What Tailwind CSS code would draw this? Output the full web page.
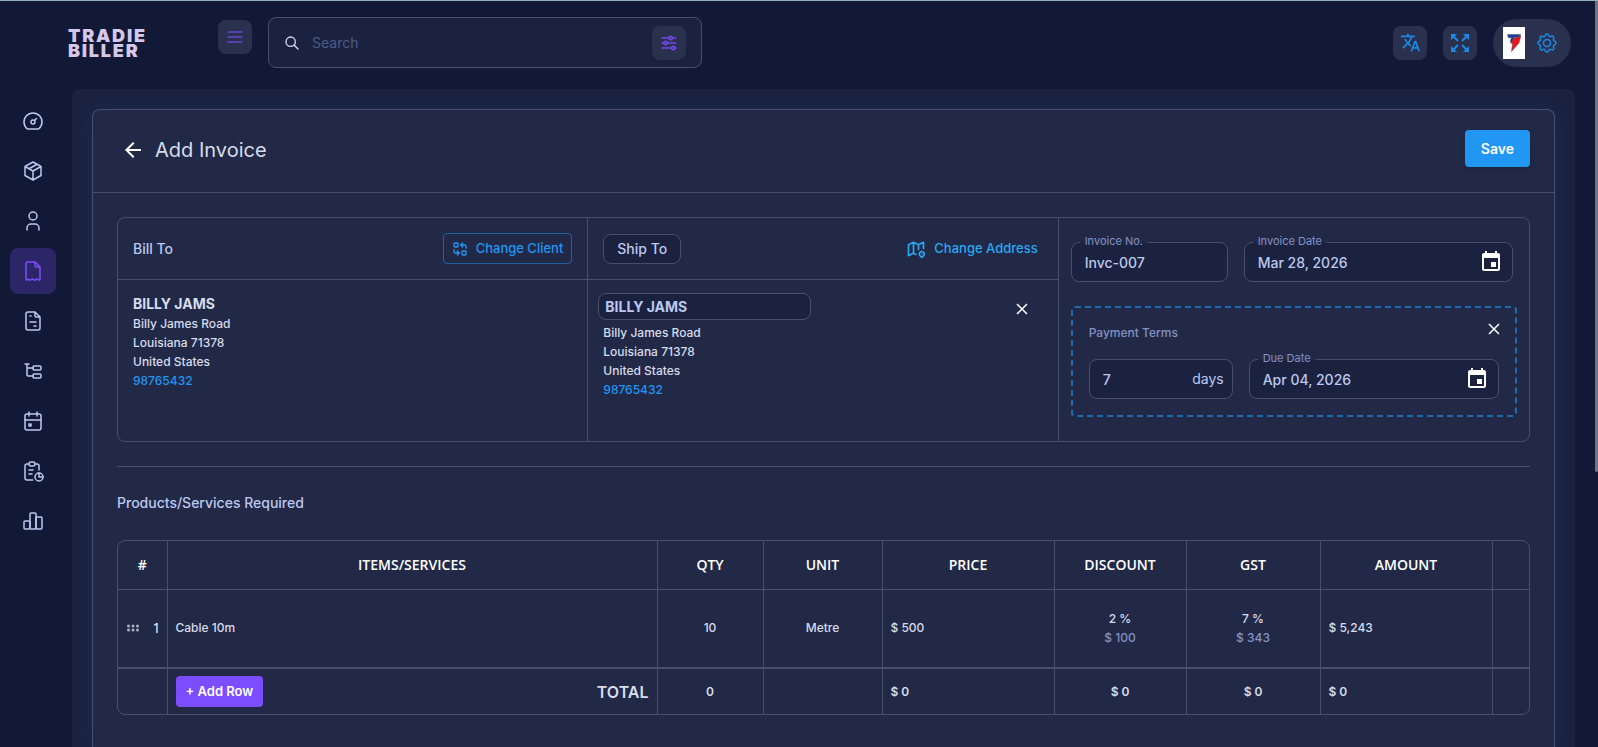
<!DOCTYPE html>
<html lang="en">
<head>
  <meta charset="UTF-8" />
  <title>Add Invoice - Tradie Biller</title>
  <meta name="viewport" content="width=device-width, initial-scale=1" />
  <script src="https://cdn.jsdelivr.net/npm/@tailwindcss/browser@4"></script>
</head>
<body class="h-screen overflow-hidden bg-[#111936] font-['Inter',sans-serif] text-sm text-[#bdc8f0]">
  <div class="flex h-full flex-col border-t border-[#8fb5ba]">

    <!-- Top bar -->
    <header class="flex h-[88px] shrink-0 items-start pt-4 pr-[27px] pl-[68px]">
      <a href="#" class="flex h-[51px] w-[150px] flex-col justify-center text-lg leading-[15px] font-black tracking-widest text-[#d6c8ea]"><span>TRADIE</span><span>BILLER</span></a>
      <button type="button" aria-label="Toggle menu" class="mt-[3px] flex size-[34px] items-center justify-center rounded-lg bg-[#29314f] text-[#6445cc]">
        <svg class="size-5" viewBox="0 0 24 24" fill="none" stroke="currentColor" stroke-width="2"><path d="M3 6h18M3 12h18M3 18h18"/></svg>
      </button>
      <div class="ml-4 flex h-[51px] w-[434px] items-center rounded-lg border border-[#474f6c] bg-[#1a223f] pr-[15px] pl-[15px]">
        <svg class="size-4 text-[#d7dcec]" viewBox="0 0 24 24" fill="none" stroke="currentColor" stroke-width="2" stroke-linecap="round"><circle cx="10" cy="10" r="7"/><path d="M21 21l-6-6"/></svg>
        <input type="text" aria-label="Search" placeholder="Search" class="ml-3 min-w-0 flex-1 bg-transparent placeholder-[#4d5a88] outline-none" />
        <button type="button" aria-label="Filters" class="flex size-[34px] items-center justify-center rounded-lg bg-[#29314f] text-[#7046e6]">
          <svg class="size-5" viewBox="0 0 24 24" fill="none" stroke="currentColor" stroke-width="2"><circle cx="14" cy="6" r="2"/><path d="M3 6h9M16 6h5"/><circle cx="8" cy="12" r="2"/><path d="M3 12h3M10 12h11"/><circle cx="17" cy="18" r="2"/><path d="M3 18h12M19 18h2"/></svg>
        </button>
      </div>
      <div class="ml-auto flex h-[51px] items-center gap-4 text-[#1e88e5]">
        <button type="button" aria-label="Language" class="flex size-[34px] items-center justify-center rounded-lg bg-[#29314f]">
          <svg class="size-[21px]" viewBox="0 0 24 24" fill="currentColor"><path d="m12.87 15.07-2.54-2.51.03-.03c1.74-1.94 2.98-4.17 3.71-6.53H17V4h-7V2H8v2H1v1.99h11.17C11.5 7.92 10.44 9.75 9 11.35 8.07 10.32 7.3 9.19 6.69 8h-2c.73 1.63 1.73 3.17 2.98 4.56l-5.09 5.02L4 19l5-5 3.11 3.11.76-2.04zM18.5 10h-2L12 22h2l1.12-3h4.75L21 22h2l-4.5-12zm-2.62 7 1.62-4.33L19.12 17h-3.24z"/></svg>
        </button>
        <button type="button" aria-label="Full screen" class="flex size-[34px] items-center justify-center rounded-lg bg-[#29314f]">
          <svg class="size-5" viewBox="0 0 20 20" fill="currentColor" stroke="currentColor" stroke-width="2"><path stroke="none" d="M1 1h6L1 7zM19 1v6l-6-6zM1 19v-6l6 6zM19 19h-6l6-6z"/><path d="M3 3l5 5M17 3l-5 5M3 17l5-5M17 17l-5-5"/></svg>
        </button>
        <button type="button" aria-label="Account settings" class="flex h-12 w-[78px] items-center gap-[10px] rounded-full bg-[#29314f] pl-[10px]">
          <svg class="h-8 w-[22px] bg-white" viewBox="0 0 22 32"><path fill="#173f9c" stroke="#5b5360" stroke-width=".5" d="M4.500 7.500h13l-1.500 3h-5l-1.500 5-2.500-1 1.500-4-3 .5z"/><path fill="#e8141f" stroke="#5b5360" stroke-width=".5" d="M11.500 11l6.500-2.500-2 7.500-7.500 8.500 1-7.500-2-1z"/></svg>
          <svg class="size-6" viewBox="0 0 24 24" fill="none" stroke="currentColor" stroke-width="1.5"><path d="M10.325 4.317c.426-1.756 2.924-1.756 3.35 0a1.724 1.724 0 0 0 2.573 1.066c1.543-.94 3.31.826 2.37 2.37a1.724 1.724 0 0 0 1.065 2.572c1.756.426 1.756 2.924 0 3.35a1.724 1.724 0 0 0-1.066 2.573c.94 1.543-.826 3.31-2.37 2.37a1.724 1.724 0 0 0-2.572 1.065c-.426 1.756-2.924 1.756-3.35 0a1.724 1.724 0 0 0-2.573-1.066c-1.543.94-3.31-.826-2.37-2.37a1.724 1.724 0 0 0-1.065-2.572c-1.756-.426-1.756-2.924 0-3.35a1.724 1.724 0 0 0 1.066-2.573c-.94-1.543.826-3.31 2.37-2.37 1 .608 2.296.07 2.572-1.065z"/><circle cx="12" cy="12" r="3.5"/></svg>
        </button>
      </div>
    </header>

    <div class="flex min-h-0 flex-1">
      <!-- Side navigation -->
      <nav class="flex w-[72px] shrink-0 flex-col gap-1 pt-[9px] pl-[10px]">
        <a href="#" aria-label="Dashboard" class="flex size-[46px] items-center justify-center rounded-lg">
          <svg class="size-6" viewBox="0 0 24 24" fill="none" stroke="currentColor" stroke-width="1.5" stroke-linecap="round" stroke-linejoin="round"><circle cx="12" cy="13" r="2"/><path d="M13.45 11.55l2.05-2.05M6.4 20a9 9 0 1 1 11.2 0z"/></svg>
        </a>
        <a href="#" aria-label="Products" class="flex size-[46px] items-center justify-center rounded-lg">
          <svg class="size-6" viewBox="0 0 24 24" fill="none" stroke="currentColor" stroke-width="1.5" stroke-linecap="round" stroke-linejoin="round"><path d="M12 3l8 4.5v9L12 21l-8-4.5v-9zM12 12l8-4.5M12 12v9M12 12L4 7.5M16 5.25l-8 4.5"/></svg>
        </a>
        <a href="#" aria-label="Clients" class="flex size-[46px] items-center justify-center rounded-lg">
          <svg class="size-6" viewBox="0 0 24 24" fill="none" stroke="currentColor" stroke-width="1.5" stroke-linecap="round" stroke-linejoin="round"><circle cx="12" cy="7" r="4"/><path d="M6 21v-2a4 4 0 0 1 4-4h4a4 4 0 0 1 4 4v2"/></svg>
        </a>
        <a href="#" aria-label="Invoices" aria-current="page" class="flex size-[46px] items-center justify-center rounded-lg bg-[#2d2666] text-[#7c4dff]">
          <svg class="size-6" viewBox="0 0 24 24" fill="none" stroke="currentColor" stroke-width="1.5" stroke-linecap="round" stroke-linejoin="round"><path d="M14 3v4a1 1 0 0 0 1 1h4M5 20V5a2 2 0 0 1 2-2h7l5 5v12c0 1-1 1.300-1.800.6-.8-.8-1.600-.8-2.400 0-.8.700-1.400.700-2.200 0-.8-.8-1.600-.8-2.400 0-.8.700-1.400.700-2.200 0-.6-.6-1.300-.5-1.900.1C6.200 21.300 5 21 5 20z"/></svg>
        </a>
        <a href="#" aria-label="Quotes" class="flex size-[46px] items-center justify-center rounded-lg">
          <svg class="size-6" viewBox="0 0 24 24" fill="none" stroke="currentColor" stroke-width="1.5" stroke-linecap="round" stroke-linejoin="round"><path d="M14 3v4a1 1 0 0 0 1 1h4M17 21H7a2 2 0 0 1-2-2V5a2 2 0 0 1 2-2h7l5 5v11a2 2 0 0 1-2 2zM9 7h1M9 13h6M13 17h2"/></svg>
        </a>
        <a href="#" aria-label="Jobs" class="flex size-[46px] items-center justify-center rounded-lg">
          <svg class="size-6" viewBox="0 0 24 24" fill="none" stroke="currentColor" stroke-width="1.5" stroke-linecap="round" stroke-linejoin="round"><path d="M6 9h6M4 5h4M6 5v11a1 1 0 0 0 1 1h5"/><rect x="12" y="7" width="8" height="4" rx="1"/><rect x="12" y="15" width="8" height="4" rx="1"/></svg>
        </a>
        <a href="#" aria-label="Calendar" class="flex size-[46px] items-center justify-center rounded-lg">
          <svg class="size-6" viewBox="0 0 24 24" fill="none" stroke="currentColor" stroke-width="1.5" stroke-linecap="round" stroke-linejoin="round"><rect x="4" y="5" width="16" height="16" rx="2"/><path d="M16 3v4M8 3v4M4 11h16M8 15h2v2H8z"/></svg>
        </a>
        <a href="#" aria-label="Timesheets" class="flex size-[46px] items-center justify-center rounded-lg">
          <svg class="size-6" viewBox="0 0 24 24" fill="none" stroke="currentColor" stroke-width="1.5" stroke-linecap="round" stroke-linejoin="round"><path d="M8 5H6a2 2 0 0 0-2 2v12a2 2 0 0 0 2 2h5.700M18 14v4h4M18 11V7a2 2 0 0 0-2-2h-2M8 11h4M8 15h3"/><rect x="8" y="3" width="6" height="4" rx="2"/><circle cx="18" cy="18" r="4"/></svg>
        </a>
        <a href="#" aria-label="Reports" class="flex size-[46px] items-center justify-center rounded-lg">
          <svg class="size-6" viewBox="0 0 24 24" fill="none" stroke="currentColor" stroke-width="1.5" stroke-linecap="round" stroke-linejoin="round"><rect x="3" y="12" width="6" height="8" rx="1"/><rect x="9" y="4" width="6" height="16" rx="1"/><rect x="15" y="8" width="6" height="12" rx="1"/></svg>
        </a>
      </nav>

      <main class="mr-[23px] min-w-0 flex-1 overflow-hidden rounded-t-lg bg-[#1a223f] p-5 pb-0">
        <section class="min-h-full rounded-t-lg border border-b-0 border-[#474f6c] bg-[#212946] shadow-[0_2px_20px_0_rgba(33,150,243,0.1)]">
          <div class="flex items-start justify-between border-b border-[#474f6c] px-6 pt-5 pb-[25px]">
            <div class="flex h-10 items-center -mb-1">
              <button type="button" aria-label="Back" class="p-1 text-white">
                <svg class="size-6" viewBox="0 0 24 24" fill="currentColor"><path d="M20 11H7.830l5.590-5.590L12 4l-8 8 8 8 1.410-1.410L7.830 13H20v-2z"/></svg>
              </button>
              <h1 class="ml-[6px] text-xl text-[#d7dcec]">Add Invoice</h1>
            </div>
            <button type="button" class="h-[37px] rounded bg-[#2196f3] px-4 font-semibold text-white shadow-md">Save</button>
          </div>

          <div class="px-6 pt-6">
            <!-- Client, shipping and dates -->
            <div class="grid min-h-[225px] grid-cols-3 divide-x divide-[#474f6c] rounded-lg border border-[#474f6c]">
              <div>
                <div class="flex h-[62px] items-center justify-between border-b border-[#474f6c] px-[15px]">
                  <h2 class="font-medium">Bill To</h2>
                  <button type="button" class="flex h-[31px] items-center gap-2 rounded border border-[#2196f3]/50 px-2 text-[13px] font-medium text-[#2196f3]">
                    <svg class="size-4" viewBox="0 0 24 24" fill="none" stroke="currentColor" stroke-width="2" stroke-linecap="round" stroke-linejoin="round"><rect x="3" y="3" width="6" height="6" rx="1"/><rect x="15" y="15" width="6" height="6" rx="1"/><path d="M21 11V8a2 2 0 0 0-2-2h-6l3 3M16 3l-3 3M3 13v3a2 2 0 0 0 2 2h6l-3-3M8 21l3-3"/></svg>
                    Change Client
                  </button>
                </div>
                <div class="px-[15px] pt-[14px] text-xs leading-[19px] font-medium text-[#d7dcec]">
                  <p class="text-sm leading-5 font-bold">BILLY JAMS</p>
                  <p>Billy James Road</p>
                  <p>Louisiana 71378</p>
                  <p>United States</p>
                  <a href="tel:98765432" class="text-[#2196f3]">98765432</a>
                </div>
              </div>

              <div>
                <div class="flex h-[62px] items-center justify-between border-b border-[#474f6c] pr-5 pl-[15px]">
                  <input type="text" aria-label="Shipping heading" value="Ship To" class="h-[30px] w-[78px] rounded-lg border border-[#474f6c] bg-[#1a223f] px-[13px] font-medium outline-none" />
                  <button type="button" class="flex items-center gap-2 text-[13px] font-medium text-[#29a8f5]">
                    <svg class="size-5" viewBox="0 0 24 24" fill="none" stroke="currentColor" stroke-width="2" stroke-linecap="round" stroke-linejoin="round"><path d="M12 18.500L9 17l-6 3V7l6-3 6 3 6-3v7.500M9 4v13M15 7v5.500"/><path d="M21.121 20.121a3 3 0 1 0-4.242 0c.418.419 1.125 1.045 2.121 1.879 1.051-.89 1.759-1.516 2.121-1.879zM19 18v.01"/></svg>
                    Change Address
                  </button>
                </div>
                <div class="flex items-start justify-between pt-[13px] pr-7 pl-[10px]">
                  <div class="text-xs leading-[19px] font-medium text-[#d7dcec]">
                    <input type="text" aria-label="Shipping name" value="BILLY JAMS" class="mb-[3px] block h-[27px] w-[213px] rounded-lg border border-[#474f6c] bg-[#1a223f] px-[6px] text-sm font-bold text-[#bdc8f0] outline-none" />
                    <div class="pl-[5px]">
                      <p>Billy James Road</p>
                      <p>Louisiana 71378</p>
                      <p>United States</p>
                      <a href="tel:98765432" class="text-[#2196f3]">98765432</a>
                    </div>
                  </div>
                  <button type="button" aria-label="Remove shipping address" class="mt-2 text-white">
                    <svg class="size-4" viewBox="0 0 16 16" stroke="currentColor" stroke-width="1.500"><path d="M3 3l10 10M13 3L3 13"/></svg>
                  </button>
                </div>
              </div>

              <div class="px-3 pt-6">
                <div class="flex gap-4 pr-1">
                  <div class="relative flex h-10 w-[157px] items-center rounded-lg border border-[#474f6c] bg-[#1a223f] px-[13px]">
                    <label for="invoiceNo" class="absolute -top-[10px] left-2 bg-linear-to-b from-[#212946] from-60% to-[#1a223f] to-60% px-[5px] text-[11px] leading-4 text-[#8492c4]">Invoice No.</label>
                    <input type="text" id="invoiceNo" value="Invc-007" class="h-6 min-w-0 flex-1 bg-transparent font-medium outline-none" />
                  </div>
                  <div class="relative flex h-10 min-w-0 flex-1 items-center rounded-lg border border-[#474f6c] bg-[#1a223f] pr-[9px] pl-[13px]">
                    <label for="invoiceDate" class="absolute -top-[10px] left-2 bg-linear-to-b from-[#212946] from-60% to-[#1a223f] to-60% px-[5px] text-[11px] leading-4 text-[#8492c4]">Invoice Date</label>
                    <input type="text" id="invoiceDate" value="Mar 28, 2026" class="h-6 min-w-0 flex-1 bg-transparent font-medium outline-none" />
                    <button type="button" aria-label="Choose invoice date" class="text-white">
                      <svg class="size-6" viewBox="0 0 24 24" fill="currentColor"><path d="M17 12h-5v5h5v-5zM16 1v2H8V1H6v2H5c-1.110 0-1.990.9-1.990 2L3 19c0 1.100.89 2 2 2h14c1.100 0 2-.9 2-2V5c0-1.100-.9-2-2-2h-1V1h-2zm3 18H5V8h14v11z"/></svg>
                    </button>
                  </div>
                </div>

                <div class="mt-6 rounded border-2 border-dashed border-[#2196f3]/60 px-4 pt-3 pb-4">
                  <div class="flex items-start justify-between">
                    <h3 class="pt-[3px] text-xs leading-5 font-medium text-[#8492c4]">Payment Terms</h3>
                    <button type="button" aria-label="Remove payment terms" class="-mr-1 px-px pt-px text-white">
                      <svg class="size-4" viewBox="0 0 16 16" stroke="currentColor" stroke-width="1.500"><path d="M3 3l10 10M13 3L3 13"/></svg>
                    </button>
                  </div>
                  <div class="mt-4 flex gap-4">
                    <div class="flex h-10 w-[144px] items-center rounded-lg border border-[#474f6c] bg-[#1a223f] pr-2 pl-[13px]">
                      <input type="text" id="termDays" value="7" class="h-6 min-w-0 flex-1 bg-transparent font-medium outline-none" />
                      <label for="termDays">days</label>
                    </div>
                    <div class="relative flex h-10 min-w-0 flex-1 items-center rounded-lg border border-[#474f6c] bg-[#1a223f] pr-[9px] pl-[13px]">
                      <label for="dueDate" class="absolute -top-[10px] left-2 bg-linear-to-b from-[#212946] from-60% to-[#1a223f] to-60% px-[5px] text-[11px] leading-4 text-[#8492c4]">Due Date</label>
                      <input type="text" id="dueDate" value="Apr 04, 2026" class="h-6 min-w-0 flex-1 bg-transparent font-medium outline-none" />
                      <button type="button" aria-label="Choose due date" class="text-white">
                        <svg class="size-6" viewBox="0 0 24 24" fill="currentColor"><path d="M17 12h-5v5h5v-5zM16 1v2H8V1H6v2H5c-1.110 0-1.990.9-1.990 2L3 19c0 1.100.89 2 2 2h14c1.100 0 2-.9 2-2V5c0-1.100-.9-2-2-2h-1V1h-2zm3 18H5V8h14v11z"/></svg>
                      </button>
                    </div>
                  </div>
                </div>
              </div>
            </div>

            <hr class="mt-6 border-[#474f6c]" />
            <h2 class="mt-6 mb-[25px] leading-6 font-medium">Products/Services Required</h2>

            <!-- Line items -->
            <div class="rounded-lg border border-[#474f6c]">
              <table class="w-full table-fixed text-xs font-medium text-[#d7dcec]">
                <thead class="font-['Open_Sans',sans-serif] text-sm text-white">
                  <tr class="h-12 divide-x divide-[#474f6c] border-b border-[#474f6c]">
                    <th class="w-[49px] font-semibold">#</th>
                    <th class="font-semibold">ITEMS/SERVICES</th>
                    <th class="w-[106px] font-semibold">QTY</th>
                    <th class="w-[119px] font-semibold">UNIT</th>
                    <th class="w-[172px] font-semibold">PRICE</th>
                    <th class="w-[132px] font-semibold">DISCOUNT</th>
                    <th class="w-[134px] font-semibold">GST</th>
                    <th class="w-[172px] font-semibold">AMOUNT</th>
                    <th class="w-[37px]"></th>
                  </tr>
                </thead>
                <tbody>
                  <tr class="h-[79px] divide-x divide-[#474f6c] border-b-2 border-[#474f6c]">
                    <td class="pr-[6px] pl-[9px]">
                      <div class="flex items-center justify-between">
                        <svg class="h-2 w-3 text-[#a9afc4]" viewBox="0 0 12 8" fill="currentColor"><circle cx="1.500" cy="2" r="1.500"/><circle cx="6" cy="2" r="1.500"/><circle cx="10.500" cy="2" r="1.500"/><circle cx="1.500" cy="6" r="1.500"/><circle cx="6" cy="6" r="1.500"/><circle cx="10.500" cy="6" r="1.500"/></svg>
                        <span class="font-['Open_Sans',sans-serif] text-sm font-normal text-white">1</span>
                      </div>
                    </td>
                    <td class="px-2">Cable 10m</td>
                    <td class="text-center">10</td>
                    <td class="text-center">Metre</td>
                    <td class="px-2">$ 500</td>
                    <td class="text-center leading-[19px]">2 %<br><span class="text-[#8492c4]">$ 100</span></td>
                    <td class="text-center leading-[19px]">7 %<br><span class="text-[#8492c4]">$ 343</span></td>
                    <td class="px-2">$ 5,243</td>
                    <td></td>
                  </tr>
                </tbody>
                <tfoot>
                  <tr class="h-[46px] divide-x divide-[#474f6c] font-semibold">
                    <td></td>
                    <td class="px-2">
                      <div class="flex items-center justify-between">
                        <button type="button" class="h-[31px] rounded bg-[#7c4dff] px-[10px] text-[13px] font-semibold text-white">+ Add Row</button>
                        <span class="text-base leading-5">TOTAL</span>
                      </div>
                    </td>
                    <td class="text-center">0</td>
                    <td></td>
                    <td class="px-2">$ 0</td>
                    <td class="text-center">$ 0</td>
                    <td class="text-center">$ 0</td>
                    <td class="px-2">$ 0</td>
                    <td></td>
                  </tr>
                </tfoot>
              </table>
            </div>
          </div>
        </section>
      </main>
    </div>
  </div>

  <!-- Scroll thumb -->
  <div class="fixed top-px right-0 h-[63%] w-[3px] rounded-b bg-[#6b7488]"></div>
</body>
</html>
